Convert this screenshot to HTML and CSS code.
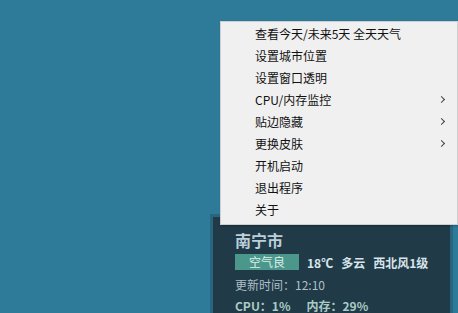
FILE: index.html
```html
<!DOCTYPE html>
<html lang="zh-CN">
<head>
    <meta charset="UTF-8">
    <title>天气</title>
    <link rel="stylesheet" href="styles.css">
</head>
<body>
    <div class="desktop">
        <div class="widget">
            <div class="city">南宁市</div>
            <div class="weather-row">
                <span class="aqi">空气良</span>
                <span class="now">18℃</span>
                <span class="now">多云</span>
                <span class="now">西北风1级</span>
            </div>
            <div class="updated">更新时间：12:10</div>
            <div class="usage">CPU：1%<span class="gap"></span>内存：29%</div>
        </div>

        <ul class="menu">
            <li>查看今天/未来5天 全天天气</li>
            <li>设置城市位置</li>
            <li>设置窗口透明</li>
            <li class="sub">CPU/内存监控</li>
            <li class="sub">贴边隐藏</li>
            <li class="sub">更换皮肤</li>
            <li>开机启动</li>
            <li>退出程序</li>
            <li>关于</li>
        </ul>
    </div>
</body>
</html>
```

FILE: styles.css
```css
* {
    margin: 0;
    padding: 0;
    box-sizing: border-box;
}

body {
    background: #2e7a99;
    font-family: "Noto Sans CJK SC", "Noto Sans", sans-serif;
    overflow: hidden;
}

.desktop {
    position: relative;
    width: 458px;
    height: 313px;
}

/* weather window */
.widget {
    position: absolute;
    left: 210px;
    top: 214px;
    width: 243px;
    height: 110px;
    background: #203a47;
    border: 3px solid #2a6580;
    padding: 12px 0 0 22px;
    color: #c3d4dc;
}

.city {
    font-size: 16px;
    font-weight: bold;
    line-height: 22px;
    color: #bccfd9;
}

.weather-row {
    display: flex;
    align-items: center;
    gap: 8px;
    margin-top: 2px;
    height: 18px;
}

.aqi {
    display: inline-block;
    width: 64px;
    height: 16px;
    line-height: 16px;
    background: #4c978b;
    color: #dcefe9;
    font-size: 12px;
    text-align: center;
}

.now {
    font-size: 12px;
    font-weight: bold;
    color: #d8e4ea;
}

.updated {
    margin-top: 3px;
    font-size: 12px;
    line-height: 21px;
    color: #aebfc8;
}

.usage {
    font-size: 12px;
    font-weight: bold;
    line-height: 21px;
    color: #a9cbc4;
}

.gap {
    display: inline-block;
    width: 16px;
}

/* context menu */
.menu {
    position: absolute;
    left: 220px;
    top: 21px;
    width: 238px;
    list-style: none;
    background: #f0f0f0;
    border: 1px solid #cfcfcf;
    padding: 1px 0 3px;
    box-shadow: 1px 1px 2px rgba(0, 0, 0, 0.25);
}

.menu li {
    position: relative;
    height: 22px;
    line-height: 22px;
    padding-left: 34px;
    font-size: 12px;
    color: #111;
}

.menu li.sub::after {
    content: "";
    position: absolute;
    right: 13px;
    top: 8px;
    width: 4px;
    height: 4px;
    border-right: 1px solid #444;
    border-top: 1px solid #444;
    transform: rotate(45deg);
}
```
